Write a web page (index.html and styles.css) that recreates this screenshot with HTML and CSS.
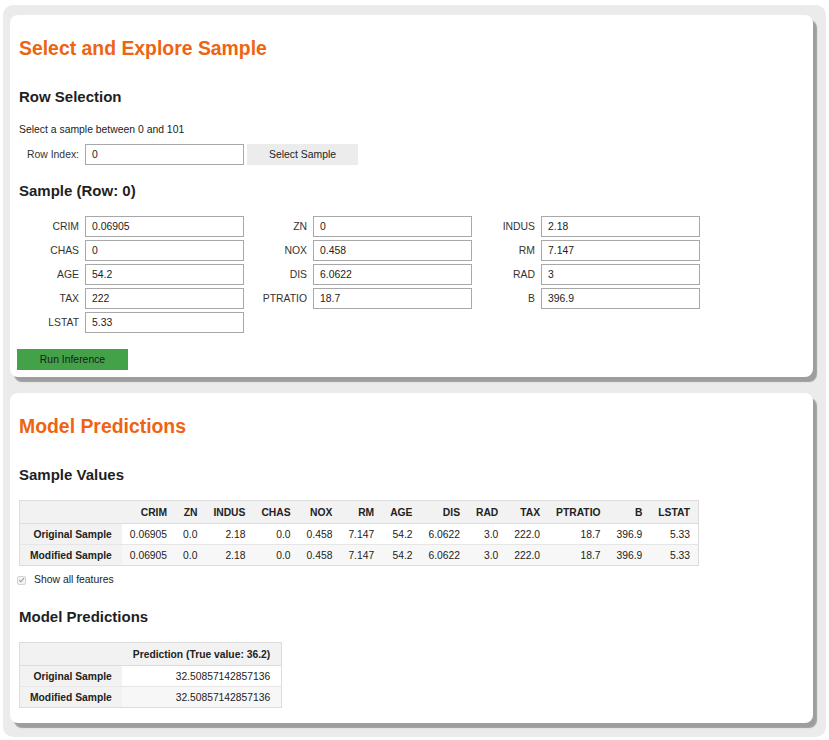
FILE: index.html
```html
<!DOCTYPE html>
<html>
<head>
<meta charset="utf-8">
<link rel="stylesheet" href="styles.css">
</head>
<body>
<div class="outer">
  <section class="card">
    <h1 class="title">Select and Explore Sample</h1>
    <h3 class="h3">Row Selection</h3>
    <p class="note">Select a sample between 0 and 101</p>
    <div class="rowsel">
      <div class="field"><label>Row Index:</label><input type="text" value="0"></div>
      <button class="btn">Select Sample</button>
    </div>
    <h3 class="h3 h3-sample">Sample (Row: 0)</h3>
    <div class="grid">
      <div class="field"><label>CRIM</label><input type="text" value="0.06905"></div>
      <div class="field"><label>ZN</label><input type="text" value="0"></div>
      <div class="field"><label>INDUS</label><input type="text" value="2.18"></div>
      <div class="field"><label>CHAS</label><input type="text" value="0"></div>
      <div class="field"><label>NOX</label><input type="text" value="0.458"></div>
      <div class="field"><label>RM</label><input type="text" value="7.147"></div>
      <div class="field"><label>AGE</label><input type="text" value="54.2"></div>
      <div class="field"><label>DIS</label><input type="text" value="6.0622"></div>
      <div class="field"><label>RAD</label><input type="text" value="3"></div>
      <div class="field"><label>TAX</label><input type="text" value="222"></div>
      <div class="field"><label>PTRATIO</label><input type="text" value="18.7"></div>
      <div class="field"><label>B</label><input type="text" value="396.9"></div>
      <div class="field"><label>LSTAT</label><input type="text" value="5.33"></div>
    </div>
    <button class="btn run">Run Inference</button>
  </section>

  <section class="card card2">
    <h1 class="title">Model Predictions</h1>
    <h3 class="h3">Sample Values</h3>
    <table class="df">
      <thead>
        <tr><th></th><th>CRIM</th><th>ZN</th><th>INDUS</th><th>CHAS</th><th>NOX</th><th>RM</th><th>AGE</th><th>DIS</th><th>RAD</th><th>TAX</th><th>PTRATIO</th><th>B</th><th>LSTAT</th></tr>
      </thead>
      <tbody>
        <tr><th>Original Sample</th><td>0.06905</td><td>0.0</td><td>2.18</td><td>0.0</td><td>0.458</td><td>7.147</td><td>54.2</td><td>6.0622</td><td>3.0</td><td>222.0</td><td>18.7</td><td>396.9</td><td>5.33</td></tr>
        <tr><th>Modified Sample</th><td>0.06905</td><td>0.0</td><td>2.18</td><td>0.0</td><td>0.458</td><td>7.147</td><td>54.2</td><td>6.0622</td><td>3.0</td><td>222.0</td><td>18.7</td><td>396.9</td><td>5.33</td></tr>
      </tbody>
    </table>
    <div class="check">
      <span class="box"><svg width="8" height="8" viewBox="0 0 8 8"><path d="M1.3 4.2 L3.2 6 L6.8 1.8" fill="none" stroke="#9a9a9a" stroke-width="1.2"/></svg></span>
      <span class="check-label">Show all features</span>
    </div>
    <h3 class="h3 h3-pred">Model Predictions</h3>
    <table class="df pred">
      <thead>
        <tr><th></th><th>Prediction (True value: 36.2)</th></tr>
      </thead>
      <tbody>
        <tr><th>Original Sample</th><td>32.50857142857136</td></tr>
        <tr><th>Modified Sample</th><td>32.50857142857136</td></tr>
      </tbody>
    </table>
  </section>
</div>
</body>
</html>
```

FILE: styles.css
```css
body {
  margin: 5px 3px 3px;
  background: #fff;
  font-family: "Liberation Sans", Arial, sans-serif;
  color: #222;
}

.outer {
  background: #ebebeb;
  border-radius: 10px;
  padding: 10px 13px 14px 7px;
}

.card {
  background: #fff;
  border-radius: 8px;
  box-shadow: 4px 5px 1px #9e9e9e;
  padding: 21px 9px 7px;
}

.card2 {
  margin-top: 16px;
  padding-bottom: 15px;
}

.title {
  margin: 0;
  font-size: 19.4px;
  line-height: 24px;
  font-weight: bold;
  color: #ee6410;
}

.h3 {
  margin: 27px 0 0;
  font-size: 15px;
  line-height: 20px;
  font-weight: bold;
  color: #1f1f1f;
}

.h3-sample {
  margin-top: 16px;
}

.h3-pred {
  margin-top: 20px;
}

.note {
  margin: 16px 0 0;
  font-size: 10.4px;
  line-height: 14px;
  color: #222;
}

.rowsel {
  margin-top: 7px;
  display: flex;
  gap: 3px;
}

.field {
  display: flex;
  align-items: center;
  gap: 6px;
  width: 225px;
}

.field label {
  width: 60px;
  text-align: right;
  font-size: 10.4px;
  color: #333;
  white-space: nowrap;
}

.field input {
  width: 159px;
  height: 21px;
  box-sizing: border-box;
  margin: 0;
  padding: 0 6px;
  border: 1px solid #a8a8a8;
  border-radius: 0;
  font: 10.4px "Liberation Sans", Arial, sans-serif;
  color: #222;
  outline: none;
}

.btn {
  width: 111px;
  height: 21px;
  margin: 0;
  padding: 0;
  border: none;
  border-radius: 0;
  background: #ececec;
  font: 10.4px "Liberation Sans", Arial, sans-serif;
  color: #222;
}

.grid {
  margin-top: 15px;
  display: grid;
  grid-template-columns: repeat(3, 225px);
  gap: 3px;
}

.run {
  display: block;
  margin: 16px 0 0 -2px;
  background: #43a148;
  color: #1a1a1a;
}

.df {
  margin-top: 15px;
  border-collapse: collapse;
  border: 1px solid #dcdcdc;
  font-size: 10.3px;
  color: #222;
}

.df th,
.df td {
  padding: 0 8px;
  text-align: right;
  white-space: nowrap;
  height: 20px;
}

.df tbody th {
  padding: 0 10px;
  background: #f2f2f2;
}

.df thead th {
  height: 22px;
  background: #f2f2f2;
  border-bottom: 1px solid #dcdcdc;
}

.df tbody tr + tr {
  border-top: 1px solid #e6e6e6;
}

.df tbody tr:nth-child(2) td {
  background: #f7f7f7;
}

.pred td,
.pred thead th {
  padding: 0 11px;
}

.check {
  margin-top: 7px;
  display: flex;
  align-items: center;
  height: 14px;
}

.box {
  width: 9px;
  height: 9px;
  margin-left: -2px;
  box-sizing: border-box;
  border: 1px solid #d4d4d4;
  border-radius: 2px;
  background: #f4f4f4;
  display: flex;
  align-items: center;
  justify-content: center;
}

.check-label {
  margin-left: 8px;
  font-size: 10.4px;
  line-height: 14px;
  color: #222;
}
```
